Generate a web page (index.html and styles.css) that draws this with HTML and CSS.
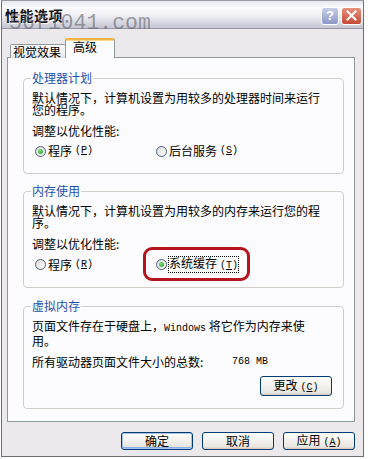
FILE: index.html
```html
<!DOCTYPE html>
<html lang="zh-CN">
  <head>
    <meta charset="UTF-8" />
    <title>性能选项</title>
    <link rel="stylesheet" href="styles.css">
  </head>
  <body>
    <div class="window">
      <div class="titlebar">
        <span class="title">性能选项</span>
        <div class="caption-buttons">
          <span class="cap-btn help">?</span>
          <span class="cap-btn close">
            <svg width="11" height="11" viewBox="0 0 11 11">
              <path d="M1.5 1.5 L9.5 9.5 M9.5 1.5 L1.5 9.5" stroke="#fff" stroke-width="2" stroke-linecap="square" />
            </svg>
          </span>
        </div>
        <span class="watermark">56f1041.com</span>
      </div>

      <div class="dialog-body">
        <div class="tabs">
          <span class="tab">视觉效果</span>
          <span class="tab active">高级</span>
        </div>

        <div class="panel">
          <div class="group">
            <div class="group-title">处理器计划</div>
            <p class="desc">默认情况下，计算机设置为用较多的处理器时间来运行<br>您的程序。</p>
            <p class="label">调整以优化性能:</p>
            <div class="options">
              <span class="option"><span class="radio checked"></span>程序<span class="key">(<u>P</u>)</span></span>
              <span class="option"><span class="radio"></span>后台服务<span class="key">(<u>S</u>)</span></span>
            </div>
          </div>

          <div class="group memory">
            <div class="group-title">内存使用</div>
            <p class="desc">默认情况下，计算机设置为用较多的内存来运行您的程<br>序。</p>
            <p class="label">调整以优化性能:</p>
            <div class="options">
              <span class="option"><span class="radio"></span>程序<span class="key">(<u>R</u>)</span></span>
              <span class="option marked"><span class="radio checked"></span><span class="focus">系统缓存<span class="key">(<u>T</u>)</span></span></span>
            </div>
          </div>

          <div class="group virtual">
            <div class="group-title">虚拟内存</div>
            <p class="desc">页面文件存在于硬盘上，<span class="en">Windows</span> 将它作为内存来使<br>用。</p>
            <p class="label size-row"><span class="size-label">所有驱动器页面文件大小的总数:</span><span class="en">768 MB</span></p>
            <div class="group-actions">
              <button class="btn btn-tall">更改<span class="key">(<u>C</u>)</span></button>
            </div>
          </div>
        </div>

        <div class="dialog-actions">
          <button class="btn default">确定</button>
          <button class="btn">取消</button>
          <button class="btn">应用<span class="key">(<u>A</u>)</span></button>
        </div>
      </div>
    </div>
  </body>
</html>
```

FILE: styles.css
```css
:root {
  --dialog-bg: #ece9ed;
  --panel-bg: #fcfcfe;
  --panel-border: #8f9a9c;
  --group-border: #d0d0c8;
  --legend-color: #2352ad;
  --btn-border: #003c74;
}

html,
body {
  margin: 0;
  background-color: #fff;
}

body {
  font-family: "Noto Sans CJK SC", "Liberation Sans", sans-serif;
  font-size: 12px;
  color: #000;
}

p {
  margin: 0;
}

.window {
  position: relative;
  width: 363px;
  margin-left: 1px;
  box-sizing: border-box;
  border: 1px solid #6f6f78;
  border-top-color: #9a9aa4;
  background-color: var(--dialog-bg);
}

.titlebar {
  height: 27px;
  display: flex;
  align-items: center;
  justify-content: space-between;
  padding: 0 1px 0 3px;
  background: linear-gradient(#e6e7ee, #fbfbfe 25%, #eeeef4 55%, #d3d3df 85%, #c5c5d3);
  border-bottom: 1px solid #9696a4;
}

.title {
  font-weight: bold;
  font-size: 14px;
  line-height: 16px;
  letter-spacing: 0.5px;
  color: #111;
  text-shadow: 1px 1px 0 #fff;
}

.caption-buttons {
  display: flex;
  gap: 2px;
  margin-top: 2px;
}

.cap-btn {
  height: 18px;
  box-sizing: border-box;
  display: flex;
  align-items: center;
  justify-content: center;
  border: 1px solid #fff;
  border-radius: 3px;
  color: #fff;
}

.cap-btn.help {
  width: 18px;
  background: linear-gradient(#c6cde6, #8e98c6);
  font-family: "Liberation Sans", sans-serif;
  font-weight: bold;
  font-size: 13px;
}

.cap-btn.close {
  width: 21px;
  background: linear-gradient(#e8907c, #c44a36);
}

.watermark {
  position: absolute;
  left: 7px;
  top: 11px;
  font-family: "Liberation Mono", monospace;
  font-size: 21.5px;
  line-height: 22px;
  color: rgba(100, 100, 110, 0.62);
  pointer-events: none;
}

.dialog-body {
  padding: 9px 8px 6px 5px;
}

.tabs {
  display: flex;
  align-items: flex-end;
  padding-left: 3px;
  margin-bottom: -1px;
}

.tab {
  height: 13px;
  line-height: 13px;
  padding: 0 4px 0 2px;
  border: 1px solid var(--panel-border);
  border-bottom: none;
  border-radius: 2px 2px 0 0;
  background: linear-gradient(#ffffff, #f0eff2 70%, #e4e3e8);
}

.tab.active {
  position: relative;
  z-index: 1;
  height: 17px;
  line-height: 11px;
  padding: 1px 17px 0 7px;
  margin-left: -1px;
  border-top: 2px solid #f2b445;
  background: var(--panel-bg);
  box-shadow: inset 0 1px 0 #ffd98a;
}

.panel {
  padding: 20px 10px 12px 15px;
  border: 1px solid var(--panel-border);
  background-color: var(--panel-bg);
}

.group {
  border: 1px solid var(--group-border);
  border-radius: 4px;
  padding: 0 10px 15px 8px;
  line-height: 11px;
}

.group.memory {
  margin-top: 17px;
}

.group.virtual {
  margin-top: 18px;
  padding-bottom: 12px;
}

.group-title {
  width: max-content;
  margin: -7px 0 0 -1px;
  padding: 0 1px;
  line-height: 12px;
  color: var(--legend-color);
  background-color: var(--panel-bg);
}

.desc {
  margin-top: 8px;
  line-height: 12px;
}

.label {
  margin-top: 9px;
}

.options {
  display: grid;
  grid-template-columns: 121px auto;
  margin-top: 8px;
  padding-left: 3px;
  line-height: 14px;
}

.option {
  display: flex;
  align-items: center;
  width: max-content;
}

.radio {
  position: relative;
  width: 11px;
  height: 11px;
  box-sizing: border-box;
  margin-right: 2px;
  border: 1px solid #4a5f86;
  border-radius: 50%;
  background: linear-gradient(135deg, #dcdcd6, #ffffff);
}

.radio.checked::after {
  content: "";
  position: absolute;
  left: 2px;
  top: 2px;
  width: 5px;
  height: 5px;
  border-radius: 50%;
  background: radial-gradient(circle at 40% 35%, #7ee07e, #1f9a1f);
}

.option.marked {
  position: relative;
}

.option.marked::before {
  content: "";
  position: absolute;
  left: -13px;
  top: -10px;
  width: 107px;
  height: 34px;
  box-sizing: border-box;
  border: 3px solid #b5141f;
  border-radius: 9px;
}

.focus {
  outline: 1px dotted #000;
  line-height: 12px;
}

.key {
  font-family: "Liberation Mono", monospace;
  font-size: 10px;
  margin-left: 3px;
}

.en {
  font-family: "Liberation Mono", monospace;
  font-size: 10px;
}

.size-row {
  display: flex;
  margin-top: 9px;
}

.size-label {
  width: 200px;
}

.group-actions {
  display: flex;
  justify-content: flex-end;
  margin-top: 9px;
  padding-right: 1px;
}

.btn {
  width: 72px;
  height: 18px;
  padding: 0;
  font-family: inherit;
  font-size: 12px;
  line-height: 14px;
  color: #000;
  border: 1px solid var(--btn-border);
  border-radius: 3px;
  background: linear-gradient(#ffffff, #f5f4f1 40%, #e8e6e0 85%, #d4d0c8);
  box-shadow: inset 0 -1px 0 #d6d0c5;
}

.btn-tall {
  height: 20px;
}

.btn.default {
  box-shadow: inset 0 0 0 1px #a8c4ee, inset 0 -2px 0 #8cb0e8;
}

.dialog-actions {
  display: flex;
  justify-content: flex-end;
  gap: 9px;
  margin-top: 10px;
}
```
